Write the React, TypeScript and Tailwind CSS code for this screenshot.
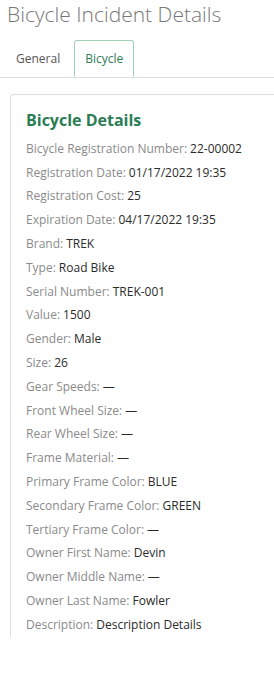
import React from "react";

const rows: [string, string][] = [
  ["Bicycle Registration Number:", "22-00002"],
  ["Registration Date:", "01/17/2022 19:35"],
  ["Registration Cost:", "25"],
  ["Expiration Date:", "04/17/2022 19:35"],
  ["Brand:", "TREK"],
  ["Type:", "Road Bike"],
  ["Serial Number:", "TREK-001"],
  ["Value:", "1500"],
  ["Gender:", "Male"],
  ["Size:", "26"],
  ["Gear Speeds:", "—"],
  ["Front Wheel Size:", "—"],
  ["Rear Wheel Size:", "—"],
  ["Frame Material:", "—"],
  ["Primary Frame Color:", "BLUE"],
  ["Secondary Frame Color:", "GREEN"],
  ["Tertiary Frame Color:", "—"],
  ["Owner First Name:", "Devin"],
  ["Owner Middle Name:", "—"],
  ["Owner Last Name:", "Fowler"],
  ["Description:", "Description Details"],
];

export default function App() {
  return (
    <div className="w-[274px] h-[673px] bg-white overflow-hidden font-['Open_Sans',sans-serif]">
      <h1 className="pl-[7px] text-[21px] leading-[28px] font-light text-[#777]">
        Bicycle Incident Details
      </h1>
      <div className="mt-[12px] flex border-b border-[#ddd]">
        <div className="pl-[16px] pr-[14px] h-[37px] flex items-center text-[12px] text-[#555]">General</div>
        <div className="-mb-px px-[10px] h-[37px] flex items-center text-[12px] text-[#2e7d57] border border-[#9fd2b5] border-b-white rounded-t-[3px] bg-white">
          Bicycle
        </div>
      </div>
      <div className="ml-[10px] mt-[16px] border-l border-t border-[#ddd] rounded-tl-[4px] pl-[15px] pt-[14px]">
        <h2 className="text-[16px] leading-[22px] font-bold text-[#2a7d55]">Bicycle Details</h2>
        <div className="mt-[6px] flex flex-col">
          {rows.map(([label, value]) => (
            <div key={label} className="h-[23.8px] flex items-center text-[12px] whitespace-nowrap">
              <span className="text-[#8a8a8a]">{label}</span>
              <span className="ml-[3px] text-[#2b2b2b]">{value}</span>
            </div>
          ))}
        </div>
      </div>
    </div>
  );
}
